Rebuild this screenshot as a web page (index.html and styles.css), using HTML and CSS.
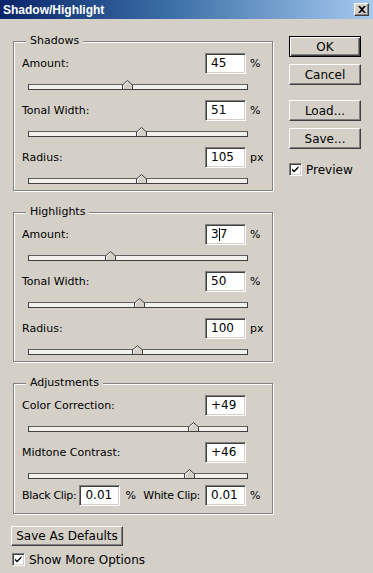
FILE: index.html
```html
<!DOCTYPE html>
<html>
<head>
<meta charset="utf-8">
<link rel="stylesheet" href="styles.css">
</head>
<body>
<div class="window">
  <div class="titlebar">
    <span class="title">Shadow/Highlight</span>
    <span class="close"><svg width="8" height="7" viewBox="0 0 8 7"><path d="M0 0h2l2 2 2-2h2L5 3.5 8 7H6L4 5 2 7H0l3-3.5z" fill="#000"/></svg></span>
  </div>
  <div class="content">
    <div class="left">
      <div class="group">
        <span class="legend">Shadows</span>
        <div class="row"><span class="label">Amount:</span><span class="field">45</span><span class="unit">%</span></div>
        <div class="slider"><div class="track"></div><svg class="thumb" style="left:94px" width="11" height="10" viewBox="0 0 11 10"><path d="M0.5 9.5V5L5.5 0.5L10.5 5V9.5Z" fill="#d4d0c8" stroke="#404040"/><path d="M1.5 8.5V5.3L5.5 1.7" fill="none" stroke="#fff"/></svg></div>
        <div class="row"><span class="label">Tonal Width:</span><span class="field">51</span><span class="unit">%</span></div>
        <div class="slider"><div class="track"></div><svg class="thumb" style="left:108px" width="11" height="10" viewBox="0 0 11 10"><path d="M0.5 9.5V5L5.5 0.5L10.5 5V9.5Z" fill="#d4d0c8" stroke="#404040"/><path d="M1.5 8.5V5.3L5.5 1.7" fill="none" stroke="#fff"/></svg></div>
        <div class="row"><span class="label">Radius:</span><span class="field">105</span><span class="unit">px</span></div>
        <div class="slider"><div class="track"></div><svg class="thumb" style="left:108px" width="11" height="10" viewBox="0 0 11 10"><path d="M0.5 9.5V5L5.5 0.5L10.5 5V9.5Z" fill="#d4d0c8" stroke="#404040"/><path d="M1.5 8.5V5.3L5.5 1.7" fill="none" stroke="#fff"/></svg></div>
      </div>
      <div class="group">
        <span class="legend">Highlights</span>
        <div class="row"><span class="label">Amount:</span><span class="field">3<span class="caret"></span>7</span><span class="unit">%</span></div>
        <div class="slider"><div class="track"></div><svg class="thumb" style="left:77px" width="11" height="10" viewBox="0 0 11 10"><path d="M0.5 9.5V5L5.5 0.5L10.5 5V9.5Z" fill="#d4d0c8" stroke="#404040"/><path d="M1.5 8.5V5.3L5.5 1.7" fill="none" stroke="#fff"/></svg></div>
        <div class="row"><span class="label">Tonal Width:</span><span class="field">50</span><span class="unit">%</span></div>
        <div class="slider"><div class="track"></div><svg class="thumb" style="left:106px" width="11" height="10" viewBox="0 0 11 10"><path d="M0.5 9.5V5L5.5 0.5L10.5 5V9.5Z" fill="#d4d0c8" stroke="#404040"/><path d="M1.5 8.5V5.3L5.5 1.7" fill="none" stroke="#fff"/></svg></div>
        <div class="row"><span class="label">Radius:</span><span class="field">100</span><span class="unit">px</span></div>
        <div class="slider"><div class="track"></div><svg class="thumb" style="left:104px" width="11" height="10" viewBox="0 0 11 10"><path d="M0.5 9.5V5L5.5 0.5L10.5 5V9.5Z" fill="#d4d0c8" stroke="#404040"/><path d="M1.5 8.5V5.3L5.5 1.7" fill="none" stroke="#fff"/></svg></div>
      </div>
      <div class="group group-adj">
        <span class="legend">Adjustments</span>
        <div class="row"><span class="label">Color Correction:</span><span class="field">+49</span><span class="unit"></span></div>
        <div class="slider"><div class="track"></div><svg class="thumb" style="left:160px" width="11" height="10" viewBox="0 0 11 10"><path d="M0.5 9.5V5L5.5 0.5L10.5 5V9.5Z" fill="#d4d0c8" stroke="#404040"/><path d="M1.5 8.5V5.3L5.5 1.7" fill="none" stroke="#fff"/></svg></div>
        <div class="row"><span class="label">Midtone Contrast:</span><span class="field">+46</span><span class="unit"></span></div>
        <div class="slider"><div class="track"></div><svg class="thumb" style="left:156px" width="11" height="10" viewBox="0 0 11 10"><path d="M0.5 9.5V5L5.5 0.5L10.5 5V9.5Z" fill="#d4d0c8" stroke="#404040"/><path d="M1.5 8.5V5.3L5.5 1.7" fill="none" stroke="#fff"/></svg></div>
        <div class="row clip-row">
          <span class="clip-label">Black Clip:</span><span class="field clip-field">0.01</span><span class="clip-unit">%</span>
          <span class="label white-label">White Clip:</span><span class="field">0.01</span><span class="unit">%</span>
        </div>
      </div>
      <div class="btn btn-defaults">Save As Defaults</div>
      <div class="check-row"><span class="checkbox"><svg width="9" height="9" viewBox="0 0 9 9"><path d="M1 3.5l2 2 4.5-4.5v2L3 7.5l-2-2z" fill="#000"/></svg></span><span>Show More Options</span></div>
    </div>
    <div class="right">
      <div class="btn btn-default">OK</div>
      <div class="btn">Cancel</div>
      <div class="btn btn-gap">Load...</div>
      <div class="btn">Save...</div>
      <div class="check-row preview"><span class="checkbox"><svg width="9" height="9" viewBox="0 0 9 9"><path d="M1 3.5l2 2 4.5-4.5v2L3 7.5l-2-2z" fill="#000"/></svg></span><span>Preview</span></div>
    </div>
  </div>
</div>
</body>
</html>
```
FILE: styles.css
```css
* { box-sizing: border-box; }
html, body { margin: 0; padding: 0; }
body {
  background: #d4d0c8;
  font-family: "DejaVu Sans", Verdana, sans-serif;
  font-size: 11px;
  color: #000;
  width: 373px;
  height: 573px;
  overflow: hidden;
}
.window {
  width: 373px;
  height: 573px;
  background: #d4d0c8;
  display: flex;
  flex-direction: column;
}
.titlebar {
  height: 19px;
  flex: none;
  background: linear-gradient(to right, #0a246a 0%, #3a6ea5 45%, #a6caf0 100%);
  display: flex;
  align-items: center;
  justify-content: space-between;
  padding: 0 3px 0 3px;
}
.title {
  color: #fff;
  font-family: "Liberation Sans", Arial, sans-serif;
  font-weight: bold;
  font-size: 12px;
  line-height: 14px;
}
.close {
  width: 15px;
  height: 13px;
  background: #d4d0c8;
  border: 1px solid;
  border-color: #fff #404040 #404040 #fff;
  box-shadow: inset -1px -1px 0 #808080;
  display: flex;
  align-items: center;
  justify-content: center;
  margin-right: 1px;
}
.close svg { display: block; margin-top: -1px; }
.content {
  display: flex;
  padding: 22px 0 0 12px;
  flex: 1;
}
.left {
  width: 262px;
  display: flex;
  flex-direction: column;
}
.group {
  margin-left: 1px;
  width: 260px;
  border: 1px solid #808080;
  box-shadow: inset 1px 1px 0 #fff, 1px 1px 0 #fff;
  display: flex;
  flex-direction: column;
  padding: 0 0 4px 0;
  margin-bottom: 21px;
}
.group-adj { padding-bottom: 7px; margin-bottom: 12px; }
.legend {
  align-self: flex-start;
  margin: -8px 0 0 12px;
  padding: 0 4px;
  background: #d4d0c8;
  line-height: 13px;
  height: 13px;
}
.row {
  display: flex;
  align-items: center;
  height: 21px;
  margin-top: 8px;
  padding-left: 8px;
}
.legend + .row { margin-top: 6px; }
.label { flex: 1; white-space: nowrap; }
.field {
  width: 41px;
  height: 21px;
  background: #fff;
  border: 1px solid;
  border-color: #808080 #fff #fff #808080;
  box-shadow: inset 1px 1px 0 #404040, inset -1px -1px 0 #d4d0c8;
  padding: 0 0 0 5px;
  line-height: 19px;
  font-size: 12px;
  display: flex;
  align-items: center;
  flex: none;
}
.caret {
  display: inline-block;
  width: 1px;
  height: 13px;
  background: #000;
}
.unit {
  width: 26px;
  padding-left: 4px;
  flex: none;
}
.slider {
  position: relative;
  height: 18px;
  margin-left: 14px;
  width: 220px;
}
.track {
  position: absolute;
  left: 0;
  right: 0;
  top: 10px;
  height: 6px;
  border: 1px solid #404040;
  border-top-color: #606060;
  background: #f2f1ed;
}
.thumb {
  position: absolute;
  top: 6px;
  display: block;
}
.row.clip-row { margin-top: 4px; }
.clip-label, .white-label { white-space: nowrap; letter-spacing: -0.3px; }
.clip-field { margin-left: 3px; }
.clip-unit { margin-left: 5px; }
.white-label { text-align: right; padding-right: 5px; }
.btn {
  height: 21px;
  width: 72px;
  border: 1px solid;
  border-color: #fff #404040 #404040 #fff;
  box-shadow: inset -1px -1px 0 #808080;
  display: flex;
  align-items: center;
  justify-content: center;
  font-size: 12px;
  flex: none;
}
.btn-default {
  border: 1px solid #000;
  box-shadow: inset 1px 1px 0 #fff, inset -1px -1px 0 #404040, inset -2px -2px 0 #808080;
}
.btn-defaults {
  width: 112px;
  height: 20px;
  margin-left: -1px;
}
.right {
  margin-left: 15px;
  display: flex;
  flex-direction: column;
  margin-top: -5px;
}
.right .btn + .btn { margin-top: 7px; }
.right .btn-gap { margin-top: 15px !important; }
.check-row {
  display: flex;
  align-items: center;
  height: 15px;
  margin-top: 6px;
  gap: 4px;
  font-size: 12px;
}
.right .preview { margin-top: 13px; }
.checkbox {
  width: 13px;
  height: 13px;
  background: #fff;
  border: 1px solid;
  border-color: #808080 #fff #fff #808080;
  box-shadow: inset 1px 1px 0 #404040, inset -1px -1px 0 #d4d0c8;
  display: flex;
  align-items: center;
  justify-content: center;
  flex: none;
}
.checkbox svg { display: block; }
```
